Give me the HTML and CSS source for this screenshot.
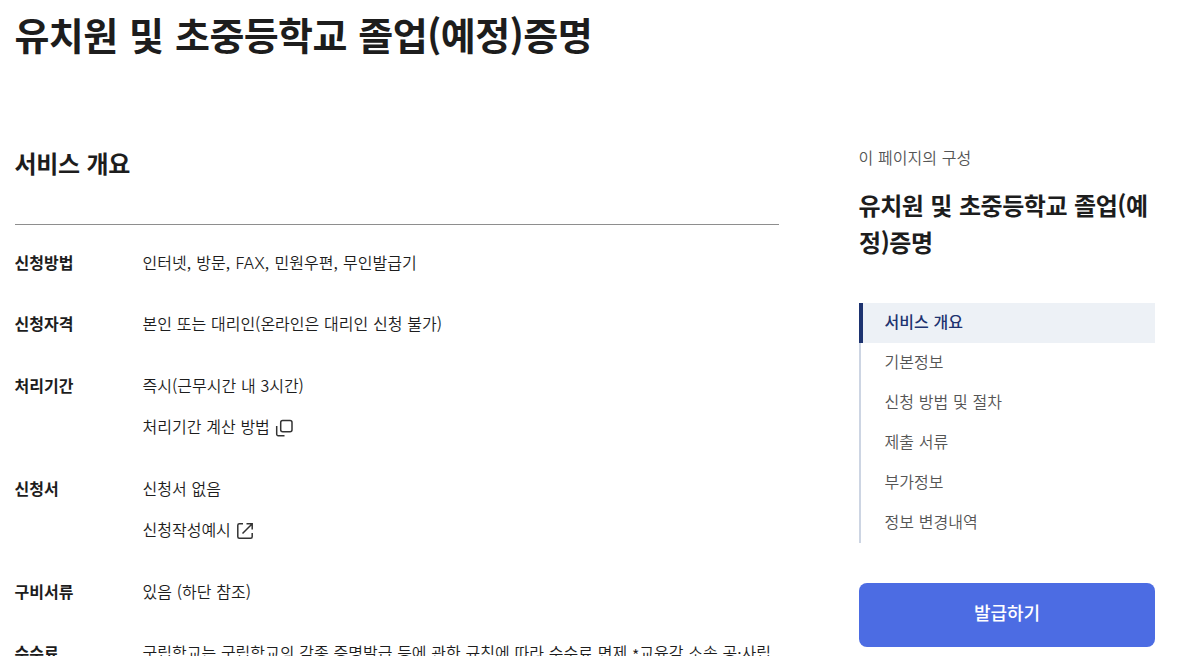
FILE: index.html
```
<!DOCTYPE html>
<html lang="ko">
  <head>
    <meta charset="utf-8" />
    <title>유치원 및 초중등학교 졸업(예정)증명</title>
    <link rel="stylesheet" href="styles.css">
  </head>
  <body>
    <h1 class="page-title">유치원 및 초중등학교 졸업(예정)증명</h1>
    <div class="container">
      <main class="content">
        <h2 class="section-title">서비스 개요</h2>
        <dl class="info-list">
          <div class="info-row">
            <dt>신청방법</dt>
            <dd><p class="methods">인터넷, 방문, <span class="latin">FAX</span>, 민원우편, 무인발급기</p></dd>
          </div>
          <div class="info-row">
            <dt>신청자격</dt>
            <dd><p>본인 또는 대리인(온라인은 대리인 신청 불가)</p></dd>
          </div>
          <div class="info-row">
            <dt>처리기간</dt>
            <dd>
              <p>즉시(근무시간 내 3시간)</p>
              <a class="link" href="#">처리기간 계산 방법
                <svg class="icon" width="20" height="20" viewBox="0 0 20 20">
                  <rect x="6.7" y="2.4" width="11.3" height="11.3" rx="2" />
                  <path d="M2.7 8v8.2a1.5 1.5 0 0 0 1.5 1.5h6.3" />
                </svg>
              </a>
            </dd>
          </div>
          <div class="info-row">
            <dt>신청서</dt>
            <dd>
              <p>신청서 없음</p>
              <a class="link" href="#">신청작성예시
                <svg class="icon" width="20" height="20" viewBox="0 0 20 20">
                  <path d="M8 2.8H4.3a1.5 1.5 0 0 0-1.5 1.5v11.4a1.5 1.5 0 0 0 1.5 1.5h11.4a1.5 1.5 0 0 0 1.5-1.5V12" />
                  <path d="M11.5 2.8h5.7v5.7M17 3l-9.5 9.5" />
                </svg>
              </a>
            </dd>
          </div>
          <div class="info-row">
            <dt>구비서류</dt>
            <dd><p>있음 (하단 참조)</p></dd>
          </div>
          <div class="info-row">
            <dt>수수료</dt>
            <dd><p class="fee">국립학교는 국립학교의 각종 증명발급 등에 관한 규칙에 따라 수수료 면제 <span class="mark">*</span>교육감 소속 공·사립</p></dd>
          </div>
        </dl>
      </main>

      <aside class="sidebar">
        <p class="sidebar-label">이 페이지의 구성</p>
        <h2 class="sidebar-title">유치원 및 초중등학교 졸업(예정)증명</h2>
        <nav class="page-nav">
          <a class="active" href="#">서비스 개요</a>
          <a href="#">기본정보</a>
          <a href="#">신청 방법 및 절차</a>
          <a href="#">제출 서류</a>
          <a href="#">부가정보</a>
          <a href="#">정보 변경내역</a>
        </nav>
        <button class="issue-btn">발급하기</button>
      </aside>
    </div>
  </body>
</html>
```
FILE: styles.css
```
* {
  box-sizing: border-box;
}

body {
  margin: 0;
  padding: 4px 23px 0 15px;
  height: 656px;
  overflow: hidden;
  background-color: #fff;
  color: #1d1d1d;
  font-family: "Noto Sans CJK KR", sans-serif;
  font-size: 16px;
  font-weight: 350;
  line-height: 25.5px;
  text-indent: -0.5px;
  word-spacing: 0.3px;
}

h1,
h2,
p,
dl,
dd {
  margin: 0;
}

a {
  color: inherit;
  text-decoration: none;
}

.page-title {
  font-size: 38px;
  font-weight: 700;
  line-height: 60px;
  letter-spacing: -0.6px;
  word-spacing: 1.5px;
}

.container {
  display: flex;
  justify-content: space-between;
  padding-top: 81px;
}

.content {
  width: 764px;
}

.section-title {
  font-size: 24px;
  font-weight: 700;
  line-height: 36px;
  letter-spacing: -0.3px;
}

.info-list {
  display: flex;
  flex-direction: column;
  gap: 36px;
  margin-top: 43px;
  padding-top: 24.6px;
  border-top: 1px solid #8e8e8e;
}

.info-row {
  display: flex;
}

.info-row dt {
  width: 128px;
  font-weight: 700;
}

.info-row dd {
  flex: 1;
  display: flex;
  flex-direction: column;
  gap: 16px;
}

.methods {
  word-spacing: 0.9px;
}

.latin {
  font-family: Inter, sans-serif;
  line-height: 1;
}

.fee {
  white-space: nowrap;
}

.mark {
  line-height: 0;
  vertical-align: -3px;
}

.link {
  display: flex;
  align-items: center;
  gap: 4px;
}

.icon {
  margin-top: 3px;
  fill: none;
  stroke: #333;
  stroke-width: 1.5;
}

.sidebar {
  width: 296px;
}

.sidebar-label {
  color: #555;
}

.sidebar-title {
  margin-top: 15px;
  font-size: 24px;
  font-weight: 700;
  line-height: 37px;
  letter-spacing: -0.45px;
  word-spacing: 0.7px;
  word-break: break-all;
}

.page-nav {
  display: flex;
  flex-direction: column;
  margin-top: 43px;
}

.page-nav a {
  height: 40px;
  padding-left: 24px;
  border-left: 2px solid #cdd5e3;
  color: #555;
  line-height: 36px;
}

.page-nav .active {
  padding-left: 22px;
  border-left: 4px solid #1d3370;
  background-color: #edf1f6;
  color: #1d3370;
  font-weight: 500;
}

.issue-btn {
  width: 100%;
  height: 64px;
  margin-top: 40px;
  padding-bottom: 6px;
  border: none;
  border-radius: 8px;
  background-color: #4c6ce3;
  color: #fff;
  font-family: inherit;
  font-size: 18px;
  font-weight: 500;
}
```
